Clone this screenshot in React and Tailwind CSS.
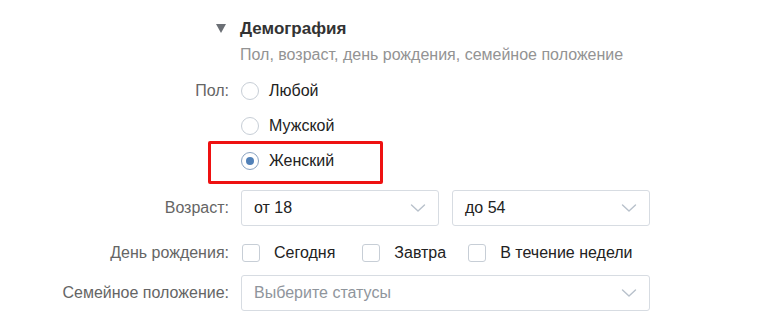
import React, { useState } from "react";

function Chevron() {
  return (
    <svg width="16" height="10" viewBox="0 0 16 10" fill="none" className="shrink-0">
      <path d="M1.5 2l6.5 6 6.5-6" stroke="#b8c1cb" strokeWidth="1.4" strokeLinecap="round" strokeLinejoin="round" />
    </svg>
  );
}

function Select({ value, placeholder, className }) {
  return (
    <div className={`h-[36px] border border-[#d7dce2] rounded-[3px] bg-white flex items-center justify-between pl-[12px] pr-[12px] ${className}`}>
      <span className={value ? "text-[#222]" : "text-[#8f959c]"}>{value || placeholder}</span>
      <Chevron />
    </div>
  );
}

function Radio({ checked, label, onClick }) {
  return (
    <div className="h-[35px] flex items-center cursor-pointer" onClick={onClick}>
      <span
        className={`w-[18px] h-[18px] rounded-full border flex items-center justify-center bg-white ${
          checked ? "border-[#8aa3c1]" : "border-[#c7ced6]"
        }`}
      >
        {checked && <span className="w-[8px] h-[8px] rounded-full bg-[#5181b8]" />}
      </span>
      <span className="ml-[10px] text-[#222]">{label}</span>
    </div>
  );
}

function Checkbox({ label, className }) {
  return (
    <div className={`flex items-center ${className}`}>
      <span className="w-[18px] h-[18px] rounded-[3px] border border-[#c7ced6] bg-white" />
      <span className="ml-[14px] text-[#222]">{label}</span>
    </div>
  );
}

export default function App() {
  const [sex, setSex] = useState("f");

  return (
    <div
      className="relative w-[772px] h-[333px] bg-white overflow-hidden text-[16px] leading-[20px]"
      style={{ fontFamily: '"Liberation Sans", Arial, sans-serif' }}
    >
      {/* Section header */}
      <div className="flex pt-[19px]">
        <div className="w-[229px] flex justify-end pr-[3px] pt-[5px]">
          <svg width="10" height="9" viewBox="0 0 10 9">
            <path d="M0 0h10L5 9z" fill="#6b6f75" />
          </svg>
        </div>
        <div className="ml-[11px]">
          <div className="text-[17px] font-bold text-[#333]">Демография</div>
          <div className="mt-[6px] text-[#939393]">Пол, возраст, день рождения, семейное положение</div>
        </div>
      </div>

      {/* Sex */}
      <div className="flex mt-[8px]">
        <div className="w-[229px] text-right text-[#656565] h-[35px] flex items-center justify-end">Пол:</div>
        <div className="ml-[12px] flex flex-col">
          <Radio label="Любой" checked={sex === "any"} onClick={() => setSex("any")} />
          <Radio label="Мужской" checked={sex === "m"} onClick={() => setSex("m")} />
          <Radio label="Женский" checked={sex === "f"} onClick={() => setSex("f")} />
        </div>
      </div>

      {/* Age */}
      <div className="flex items-center mt-[12px]">
        <div className="w-[229px] text-right text-[#656565]">Возраст:</div>
        <div className="ml-[12px] flex gap-[13px]">
          <Select value="от 18" className="w-[198px]" />
          <Select value="до 54" className="w-[198px]" />
        </div>
      </div>

      {/* Birthday */}
      <div className="flex items-center h-[32px] mt-[11px]">
        <div className="w-[229px] text-right text-[#656565]">День рождения:</div>
        <div className="ml-[13px] flex items-center">
          <Checkbox label="Сегодня" />
          <Checkbox label="Завтра" className="ml-[27px]" />
          <Checkbox label="В течение недели" className="ml-[22px]" />
        </div>
      </div>

      {/* Marital status */}
      <div className="flex items-center mt-[6px]">
        <div className="w-[229px] text-right text-[#656565]">Семейное положение:</div>
        <div className="ml-[12px]">
          <Select placeholder="Выберите статусы" className="w-[409px]" />
        </div>
      </div>

      {/* Annotation highlight */}
      <div className="absolute left-[208px] top-[141px] w-[175px] h-[43px] border-[3px] border-[#ee1111] rounded-[2px] pointer-events-none" />
    </div>
  );
}
